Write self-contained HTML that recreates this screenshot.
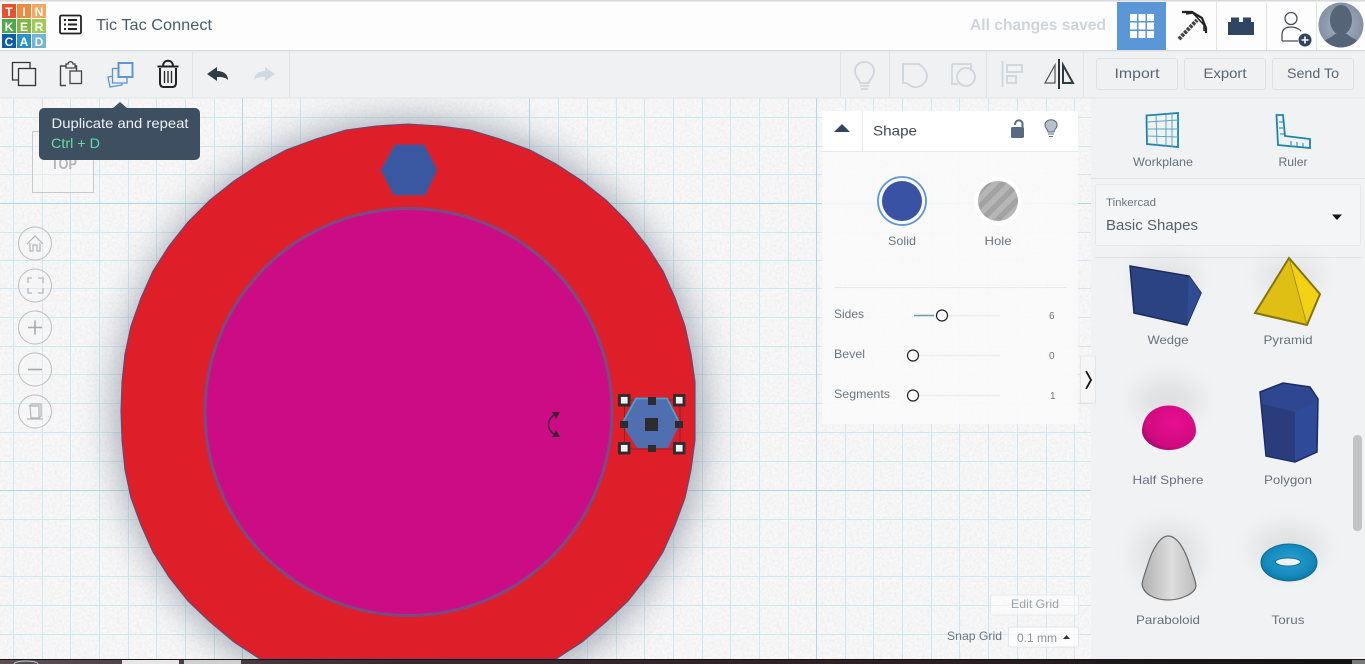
<!DOCTYPE html>
<html lang="en"><head><meta charset="utf-8"><title>Tic Tac Connect</title>
<style>html,body{margin:0;padding:0;width:1365px;height:664px;overflow:hidden;background:#f6f6f7}svg{display:block;overflow:hidden}text{font-family:"Liberation Sans",sans-serif}</style></head>
<body>
<svg width="1365" height="664" viewBox="0 0 1365 664" xmlns="http://www.w3.org/2000/svg">
<defs>
<filter id="n" x="0" y="0" width="100%" height="100%"><feTurbulence type="fractalNoise" baseFrequency=".4" numOctaves="3" seed="4"/><feColorMatrix values="0 0 0 0 .6 0 0 0 0 .6 0 0 0 0 .63 .9 0 0 0 -.3"/></filter>
<filter id="b18" x="-30%" y="-30%" width="160%" height="160%"><feGaussianBlur stdDeviation="18"/></filter>
<filter id="b8" x="-50%" y="-50%" width="200%" height="200%"><feGaussianBlur stdDeviation="12"/></filter>
<pattern id="st" patternUnits="userSpaceOnUse" width="11" height="11" patternTransform="rotate(-45)"><rect width="11" height="11" fill="#b6b6b6"/><rect width="11" height="5.5" fill="#a2a2a2"/></pattern>
<linearGradient id="par" x1="0" x2="1" y1="0" y2="0"><stop offset="0" stop-color="#b0b0b0"/><stop offset=".55" stop-color="#dedede"/><stop offset="1" stop-color="#bcbcbc"/></linearGradient>
<linearGradient id="tb" x1="0" x2="1" y1="0" y2="0"><stop offset="0" stop-color="#5a4f55"/><stop offset=".3" stop-color="#3a2a30"/><stop offset=".7" stop-color="#2a1f22"/><stop offset="1" stop-color="#111"/></linearGradient>
<radialGradient id="hs" cx=".6" cy=".4" r=".7"><stop offset="0" stop-color="#e80e90"/><stop offset=".75" stop-color="#d00a80"/><stop offset="1" stop-color="#980660"/></radialGradient>
<radialGradient id="tor" cx=".5" cy=".45" r=".6"><stop offset="0" stop-color="#2a9fd0"/><stop offset=".7" stop-color="#1489bb"/><stop offset="1" stop-color="#0c6f9c"/></radialGradient>
<radialGradient id="av" cx=".5" cy=".5" r=".6"><stop offset="0" stop-color="#a6b2c4"/><stop offset="1" stop-color="#7e8ba0"/></radialGradient>
<clipPath id="avc"><circle cx="1341" cy="25" r="22.5"/></clipPath>
</defs>

<!-- workspace -->
<rect width="1365" height="664" fill="#f8f8f9"/>
<rect width="1365" height="664" filter="url(#n)" opacity=".45"/>
<path d="M13.500 98V664M42.500 98V664M70.500 98V664M99.500 98V664M128.500 98V664M156.500 98V664M185.500 98V664M214.500 98V664M271.500 98V664M300.500 98V664M558.500 98V664M587.500 98V664M616.500 98V664M644.500 98V664M673.500 98V664M702.500 98V664M730.500 98V664M759.500 98V664M788.500 98V664M845.500 98V664M873.500 98V664M902.500 98V664M931.500 98V664M959.500 98V664M988.500 98V664M1017.500 98V664M1046.500 98V664M1074.500 98V664" stroke="#cfe7ee" fill="none"/>
<path d="M0 117.500H1091M0 146.500H1091M0 174.500H1091M0 232.500H1091M0 260.500H1091M0 288.500H1091M0 317.500H1091M0 346.500H1091M0 374.500H1091M0 403.500H1091M0 432.500H1091M0 461.500H1091M0 519.500H1091M0 547.500H1091M0 576.500H1091M0 605.500H1091M0 634.500H1091" stroke="#cfe7ee" fill="none"/>
<path d="M242.500 98V664M529.500 98V664M816.500 98V664M0 203.500H1091M0 490.500H1091" stroke="#abd9e4" fill="none"/>
<path d="M253.400 664A295 295 0 1 1 566.600 664Z" fill="#7f8a9a" opacity=".7" filter="url(#b18)"/>

<!-- TOP cube -->
<rect x="32.500" y="131.500" width="61" height="61" fill="#f7f7f8" fill-opacity=".5" stroke="#c9c9cc"/>
<text x="51" y="169" font-size="16" font-weight="700" fill="#b5b5b9" textLength="26" lengthAdjust="spacingAndGlyphs">TOP</text>

<!-- main shape -->
<polygon points="408,124 440,126 470,130 500,139 530,150 556,164 582,181 606,200 628,222 647,246 663,271 675,298 685,326 691,354 695,382 695,411 695,440 691,470 685,498 675,525 663,552 647,577 628,601 606,622 582,642 556,659 260,659 234,642 210,622 188,601 169,577 153,552 141,525 131,498 125,470 122,440 121,411 122,382 125,354 131,326 141,298 153,271 169,246 188,222 210,200 234,181 260,164 286,150 316,139 346,130 376,126" fill="#de1f2a" stroke="#5f4a78" stroke-width="1.100"/>
<circle cx="408.500" cy="412" r="203.500" fill="#cc0c85" stroke="#7b4a84" stroke-width="3"/>
<polygon points="395,145 424,145 437,170 425,195 394,195 381,170" fill="#3a58a2" stroke="#5a4f8c" stroke-width="1"/>

<!-- rotate handle -->
<path d="M556 414C547 418 545 430 556 435" fill="none" stroke="#4d1a4b" stroke-width="1.600"/>
<path d="M552 412L560 412L556 419ZM552 437L560 437L556 430Z" fill="#3d2038"/>

<!-- selected hexagon -->
<path d="M624.500 400H680M624.500 449H680M624.500 400V449M680 400V449" fill="none" stroke="#3a2c33" stroke-width=".8" opacity=".7"/>
<polygon points="636,398 667,398 680,424 668,448 637,448 622,424" fill="#4f6fb0"/>
<path d="M622 424L636 398.500H667L680 424" fill="none" stroke="#3fa7cf" stroke-width="1.800"/>
<g fill="#f2f2f2" stroke="#2b2b30" stroke-width="2.800">
<rect x="619.500" y="395.500" width="9.500" height="9.500"/><rect x="674.500" y="395.500" width="9.500" height="9.500"/>
<rect x="619.500" y="443.500" width="9.500" height="9.500"/><rect x="674.500" y="443.500" width="9.500" height="9.500"/></g>
<g fill="#2b2b30"><rect x="648" y="397" width="8" height="8"/><rect x="648" y="445" width="8" height="7"/><rect x="620" y="421" width="8" height="7"/><rect x="675" y="421" width="8" height="7"/><rect x="645" y="418" width="13" height="13"/></g>

<!-- nav buttons -->
<g fill="#f7f7f8" fill-opacity=".4" stroke="#bdbdc0" stroke-width="1">
<circle cx="35" cy="243.500" r="16.500"/><circle cx="35" cy="285.500" r="16.500"/><circle cx="35" cy="327.500" r="16.500"/><circle cx="35" cy="369.500" r="16.500"/><circle cx="35" cy="411.500" r="16.500"/></g>
<g fill="none" stroke="#b4b4b8" stroke-width="1.200">
<path d="M27 244L35 236L43 244M30 243V251H33V245H37V251H40V243"/>
<path d="M28 283V278H32M38 278H43V283M43 288V293H38M32 293H28V288" stroke-width="1.600" stroke="#c2c2c6"/>
<path d="M28 327.500H42M35 320.500V334.500" stroke-width="1.600" stroke="#a8a8ac"/>
<path d="M28 369.500H42" stroke-width="1.600" stroke="#a8a8ac"/>
<path d="M30 406H39V418H31ZM29 406L32 404H41V416L39 418M27 419H43"/></g>

<!-- top bar -->
<rect width="1365" height="51" fill="#fdfdfd"/>
<rect width="1365" height="1.500" fill="#d8d9dc"/>
<rect y="50" width="1365" height="1.500" fill="#dcdde0"/>
<g font-size="12" font-weight="700" fill="#fff" text-anchor="middle">
<rect x="2" y="4" width="14" height="14" fill="#e5522d"/><rect x="17" y="4" width="14" height="14" fill="#ef8a3e"/><rect x="32" y="4" width="14" height="14" fill="#f1a961"/>
<rect x="2" y="19" width="14" height="14" fill="#4fa84a"/><rect x="17" y="19" width="14" height="14" fill="#7db844"/><rect x="32" y="19" width="14" height="14" fill="#a4c95b"/>
<rect x="2" y="34" width="14" height="14" fill="#0c5fa6"/><rect x="17" y="34" width="14" height="14" fill="#2e90c8"/><rect x="32" y="34" width="14" height="14" fill="#72b3d9"/>
<text x="9" y="16">T</text><text x="24" y="16">I</text><text x="39" y="16">N</text>
<text x="9" y="31">K</text><text x="24" y="31">E</text><text x="39" y="31">R</text>
<text x="9" y="46">C</text><text x="24" y="46">A</text><text x="39" y="46">D</text></g>
<rect x="60" y="15.500" width="21" height="18" rx="1.500" fill="none" stroke="#222" stroke-width="1.800"/>
<path d="M64 20H66M68 20H77M64 24.500H66M68 24.500H77M64 29H66M68 29H77" stroke="#222" stroke-width="2"/>
<text x="96" y="30" font-size="16" fill="#4a5a6a" textLength="116" lengthAdjust="spacingAndGlyphs">Tic Tac Connect</text>
<text x="970" y="30" font-size="16" font-weight="700" fill="#cfd4da" textLength="136" lengthAdjust="spacingAndGlyphs">All changes saved</text>

<rect x="1117" y="2" width="49" height="48" fill="#5b96d6"/>
<g fill="#fff"><rect x="1130" y="14" width="7" height="7"/><rect x="1138.500" y="14" width="7" height="7"/><rect x="1147" y="14" width="7" height="7"/><rect x="1130" y="22.500" width="7" height="7"/><rect x="1138.500" y="22.500" width="7" height="7"/><rect x="1147" y="22.500" width="7" height="7"/><rect x="1130" y="31" width="7" height="7"/><rect x="1138.500" y="31" width="7" height="7"/><rect x="1147" y="31" width="7" height="7"/></g>
<path d="M1216.500 2V50M1266.500 2V50M1316.500 2V50" stroke="#e3e4e6"/>
<path d="M1179 39L1197 20" stroke="#444" stroke-width="4" stroke-dasharray="3 1"/>
<path d="M1182 12H1192L1202 18L1206 28V33" fill="none" stroke="#222" stroke-width="2.200"/>
<path d="M1186 14L1193 13L1204 25L1204 31" fill="none" stroke="#222" stroke-width="1.600"/>
<path d="M1228 35V22H1231V17.500H1239V22H1243V17.500H1251V22H1254V35Z" fill="#2f4560"/>
<circle cx="1291" cy="18.500" r="6" fill="none" stroke="#4a4f55" stroke-width="1.300"/>
<path d="M1282 41V35C1282 29 1286 27 1291 27C1296 27 1299 29 1301 31M1282 41H1298" fill="none" stroke="#4a4f55" stroke-width="1.300"/>
<circle cx="1305" cy="40" r="6.500" fill="#2f4560"/>
<path d="M1301.500 40H1308.500M1305 36.500V43.500" stroke="#fff" stroke-width="1.600"/>
<circle cx="1341" cy="25" r="22.500" fill="url(#av)"/>
<g clip-path="url(#avc)"><ellipse cx="1341" cy="20" rx="11" ry="15" fill="#566478"/><path d="M1319 50C1320 40 1330 39 1335 34H1347C1352 39 1362 40 1363 50Z" fill="#566478"/></g>

<!-- toolbar -->
<rect y="51.500" width="1365" height="47" fill="#f0f1f3"/>
<rect y="97.500" width="1365" height="1" fill="#e2e3e6"/>
<path d="M192.500 52V98M289.500 52V98M840.500 52V98M889.500 52V98M986.500 52V98M1083.500 52V98" stroke="#e3e4e6"/>
<path d="M18 80H12.500V62.500H30V68" fill="none" stroke="#333" stroke-width="1.300"/>
<rect x="18.500" y="68.500" width="17" height="17" fill="#f0f1f3" stroke="#333" stroke-width="1.300"/>
<path d="M66 85.500H60.500V66H66M75 66H76.500V71" fill="none" stroke="#444" stroke-width="1.400"/>
<path d="M66 66V64H68C68 61 73 61 73 64H75V68H66Z" fill="#f0f1f3" stroke="#444" stroke-width="1.300"/>
<rect x="70" y="71" width="11.500" height="12.500" fill="#f0f1f3" stroke="#444" stroke-width="1.300"/>
<path d="M108 77L120 75L122 85L110 87Z" fill="#f0f1f3" stroke="#5b96d6" stroke-width="1.300"/>
<rect x="112.500" y="68.500" width="14.500" height="14.500" fill="#f0f1f3" stroke="#5b96d6" stroke-width="1.300"/>
<rect x="118.500" y="63" width="14" height="14" fill="#f0f1f3" stroke="#5b96d6" stroke-width="2"/>
<path d="M157.500 66.500H178.500M163 66C163 59 173 59 173 66" fill="none" stroke="#222" stroke-width="1.900"/>
<path d="M160 68V83Q160 87 164 87H172Q176 87 176 83V68" fill="none" stroke="#222" stroke-width="2"/>
<path d="M164.500 71V83M168 71V83M171.500 71V83" stroke="#222" stroke-width="1.300"/>
<path d="M207 74L217 67V71C223 71 228 74 228 80C225 77 221 77 217 77V81Z" fill="#2e3c44"/>
<path d="M275 74L265 67V71C259 71 254 74 254 80C257 77 261 77 265 77V81Z" fill="#d2d9e2"/>
<g fill="none" stroke="#ced5dc" stroke-width="1.800">
<path d="M860 83C860 79 855 78 855 71C855 59 874 59 874 71C874 78 869 79 869 83ZM860 86H869M861 89H868"/>
<path d="M903 64H919C922 66 927 71 927 76C927 84 917 90 911 86L906 83H903Z"/>
<path d="M952 64H971V71"/><path d="M952 64V84H958"/><circle cx="966" cy="77" r="9"/>
<path d="M1002.500 61V87"/><rect x="1007" y="65" width="15" height="7"/><rect x="1007" y="76" width="9" height="7"/></g>
<path d="M1059 59V89" stroke="#333" stroke-width="2"/>
<path d="M1055 83H1045L1055 65Z" fill="none" stroke="#555" stroke-width="1.200"/>
<path d="M1063 83H1073L1063 65Z" fill="#f0f1f3" stroke="#2e3c44" stroke-width="2"/>
<g fill="#f0f1f3" stroke="#e0e1e4"><rect x="1096.500" y="58.500" width="81" height="31" rx="3"/><rect x="1184.500" y="58.500" width="81" height="31" rx="3"/><rect x="1272.500" y="58.500" width="81" height="31" rx="3"/></g>
<g font-size="14" fill="#5a6671" text-anchor="middle"><text x="1137" y="78" textLength="45" lengthAdjust="spacingAndGlyphs">Import</text><text x="1225" y="78" textLength="43" lengthAdjust="spacingAndGlyphs">Export</text><text x="1313" y="78" textLength="52" lengthAdjust="spacingAndGlyphs">Send To</text></g>

<!-- tooltip -->
<path d="M113 108L120 102L127 108Z" fill="#3e4f62"/>
<rect x="39" y="108" width="161" height="52" rx="5" fill="#3e4f62"/>
<text x="51.500" y="128" font-size="14" fill="#eef1f4" textLength="137" lengthAdjust="spacingAndGlyphs">Duplicate and repeat</text>
<text x="51" y="148" font-size="14" fill="#5fe0a0" textLength="49" lengthAdjust="spacingAndGlyphs">Ctrl + D</text>

<!-- shape panel -->
<rect x="822" y="111" width="256" height="313" fill="#f9fafa" fill-opacity=".9"/>
<rect x="822" y="111" width="256" height="40" fill="#fff"/>
<path d="M822 151.500H1078M862.500 111V151M834 287.500H1066" stroke="#e8e9eb" fill="none"/>
<path d="M842 124L850 132H834Z" fill="#2f4560"/>
<text x="873" y="135.500" font-size="14" fill="#3c4a58" textLength="44" lengthAdjust="spacingAndGlyphs">Shape</text>
<rect x="1011" y="127" width="13" height="11" rx="1.500" fill="#566a82"/>
<path d="M1015 125C1015 119 1022.500 119 1022.500 124V128" fill="none" stroke="#566a82" stroke-width="2"/>
<path d="M1048 132C1048 129 1045 129 1045 125C1045 118 1057 118 1057 125C1057 129 1054 129 1054 132Z" fill="#b5c0cc" stroke="#56687a" stroke-width="1"/>
<path d="M1048 134H1054M1049 136.500H1053" stroke="#56687a"/>
<circle cx="902" cy="201" r="24" fill="none" stroke="#5b96d6" stroke-width="1.800"/>
<circle cx="902" cy="201" r="20" fill="#3a52a4"/>
<circle cx="998" cy="201" r="24" fill="#fff"/>
<circle cx="998" cy="201" r="20" fill="url(#st)"/>
<g font-size="12" fill="#6a7682" text-anchor="middle"><text x="902" y="245" textLength="28" lengthAdjust="spacingAndGlyphs">Solid</text><text x="998" y="245" textLength="27" lengthAdjust="spacingAndGlyphs">Hole</text></g>
<g font-size="12" fill="#6a7682">
<text x="834" y="318" textLength="30" lengthAdjust="spacingAndGlyphs">Sides</text>
<text x="834" y="358" textLength="31" lengthAdjust="spacingAndGlyphs">Bevel</text>
<text x="834" y="398" textLength="56" lengthAdjust="spacingAndGlyphs">Segments</text>
<text x="1049" y="319" font-size="10">6</text><text x="1049" y="359" font-size="10">0</text><text x="1050" y="399" font-size="10">1</text></g>
<path d="M914 315.500H1000M914 355.500H1000M914 395.500H1000" stroke="#ecedef" stroke-width="1.500"/>
<path d="M914 315.500H934" stroke="#6f99b5" stroke-width="1.500"/>
<g fill="#fff" stroke="#222" stroke-width="1.200"><circle cx="942" cy="315.500" r="5.500"/><circle cx="913" cy="355.500" r="5.500"/><circle cx="913" cy="395.500" r="5.500"/></g>

<!-- grid controls -->
<rect x="990.500" y="595" width="88" height="20" rx="2" fill="#fff" fill-opacity=".5" stroke="#e8e9eb"/>
<text x="1011" y="608" font-size="12" fill="#9aa2a9" textLength="48" lengthAdjust="spacingAndGlyphs">Edit Grid</text>
<text x="947" y="640" font-size="12" fill="#6a7682" textLength="55" lengthAdjust="spacingAndGlyphs">Snap Grid</text>
<rect x="1008.500" y="627" width="70" height="20" rx="2" fill="#fff" fill-opacity=".7" stroke="#e4e5e7"/>
<text x="1017" y="642" font-size="12" fill="#8a929a" textLength="40" lengthAdjust="spacingAndGlyphs">0.1 mm</text>
<path d="M1063 639L1066.500 635L1070 639Z" fill="#333"/>

<!-- right panel -->
<rect x="1091" y="98.500" width="274" height="565.500" fill="#f1f2f4"/>
<path d="M1091 178.500H1365M1095 257.500H1362" stroke="#e2e3e6"/>
<rect x="1095.500" y="184.500" width="265" height="61" rx="2" fill="#f4f5f7" stroke="#e6e7ea"/>
<text x="1106" y="206" font-size="11" fill="#6a7682" textLength="50" lengthAdjust="spacingAndGlyphs">Tinkercad</text>
<text x="1106" y="230" font-size="15" fill="#54626e" textLength="92" lengthAdjust="spacingAndGlyphs">Basic Shapes</text>
<path d="M1332 214.500H1342L1337 220Z" fill="#111"/>
<g fill="none" stroke="#1b86ad" stroke-width="1.800">
<path d="M1146.500 115.500L1178 113V147L1147 144Z"/>
<path d="M1156 114.500L1157 145.500M1166 114V146.500M1172 113.500V147M1147 122L1178 120M1147 129H1178M1147 136L1178 137" stroke-width="1" stroke="#5aa7c4"/>
<path d="M1276.500 115H1283L1285 136L1310 139V148L1278 145Z"/>
<path d="M1279 122H1283M1279 128H1283M1280 134H1284M1291 141V145M1297 142V146M1303 143V147" stroke-width="1"/></g>
<g font-size="12" fill="#66727e" text-anchor="middle">
<text x="1163" y="166" textLength="60" lengthAdjust="spacingAndGlyphs">Workplane</text><text x="1293" y="166" textLength="29" lengthAdjust="spacingAndGlyphs">Ruler</text>
<text x="1168" y="344" textLength="41" lengthAdjust="spacingAndGlyphs">Wedge</text><text x="1288" y="344" textLength="49" lengthAdjust="spacingAndGlyphs">Pyramid</text>
<text x="1168" y="484" textLength="71" lengthAdjust="spacingAndGlyphs">Half Sphere</text><text x="1288" y="484" textLength="48" lengthAdjust="spacingAndGlyphs">Polygon</text>
<text x="1168" y="624" textLength="64" lengthAdjust="spacingAndGlyphs">Paraboloid</text><text x="1288" y="624" textLength="33" lengthAdjust="spacingAndGlyphs">Torus</text></g>

<!-- shadows -->
<g fill="#000" opacity=".07" filter="url(#b8)"><rect x="1135" y="262" width="60" height="30"/><rect x="1262" y="262" width="55" height="30"/><ellipse cx="1168" cy="400" rx="34" ry="22"/><ellipse cx="1168" cy="555" rx="34" ry="30"/><ellipse cx="1288" cy="548" rx="36" ry="22"/></g>

<!-- wedge -->
<polygon points="1130,266 1189,276 1201,293 1187,325 1134,313" fill="#2b4283" stroke="#1a2b5e" stroke-width="1.500"/>
<polygon points="1189,276 1201,293 1187,325 1188,300" fill="#304c94"/>
<!-- pyramid -->
<polygon points="1289,258 1255,313 1307,325" fill="#e0bf15"/>
<polygon points="1289,258 1320,294 1307,325" fill="#f2d212"/>
<polygon points="1289,258 1320,294 1307,325 1255,313" fill="none" stroke="#83730c" stroke-width="2"/>
<path d="M1289 258L1307 325" stroke="#9a8510" stroke-width=".8"/>
<!-- half sphere -->
<path d="M1142 431C1143 397 1195 397 1196 431C1196 441 1183 450 1169 450C1155 450 1142 441 1142 431Z" fill="url(#hs)"/>
<!-- polygon -->
<polygon points="1260,392 1283,383 1310,387 1318,399 1317,452 1295,462 1266,456" fill="#2f4790" stroke="#1b2c62" stroke-width="1.500"/>
<polygon points="1262,404 1295,412 1295,461 1267,455" fill="#2a3c7c"/>
<polygon points="1295,412 1317,402 1316,451 1295,461" fill="#2f4a98"/>
<!-- paraboloid -->
<path d="M1168 536C1178 536 1186 552 1190 566C1193 574 1196 582 1196 586C1195 594 1180 600 1168 600C1155 600 1143 594 1142 584C1143 578 1146 570 1148 564C1152 550 1160 536 1168 536Z" fill="url(#par)" stroke="#6a6a6a" stroke-width="1.200"/>
<!-- torus -->
<ellipse cx="1289" cy="562.500" rx="28" ry="18.500" fill="url(#tor)" stroke="#0f6d94"/>
<ellipse cx="1288" cy="562" rx="12.500" ry="4" fill="#f1f2f4" stroke="#0e6f98"/>

<!-- scrollbar -->
<rect x="1353" y="435" width="9" height="96" rx="4" fill="#c3c4c6"/>

<!-- collapse button -->
<rect x="1080.500" y="356" width="15" height="47" fill="#f6f6f7" stroke="#e4e5e7"/>
<path d="M1086 371L1091 380L1086 389" fill="none" stroke="#111" stroke-width="1.800"/>

<!-- taskbar -->
<rect y="659" width="1365" height="5" fill="url(#tb)"/>
<rect y="659" width="1365" height="1" fill="#1a1316"/>
<rect x="122" y="660" width="57" height="4" fill="#e6e6e6"/><rect x="184" y="660" width="57" height="4" fill="#cfcfcf"/>
<path d="M14 664A12 3 0 0 1 38 664" fill="none" stroke="#bcd"/>
<rect x="1352" y="660" width="13" height="4" fill="#777"/>
</svg>
</body></html>
